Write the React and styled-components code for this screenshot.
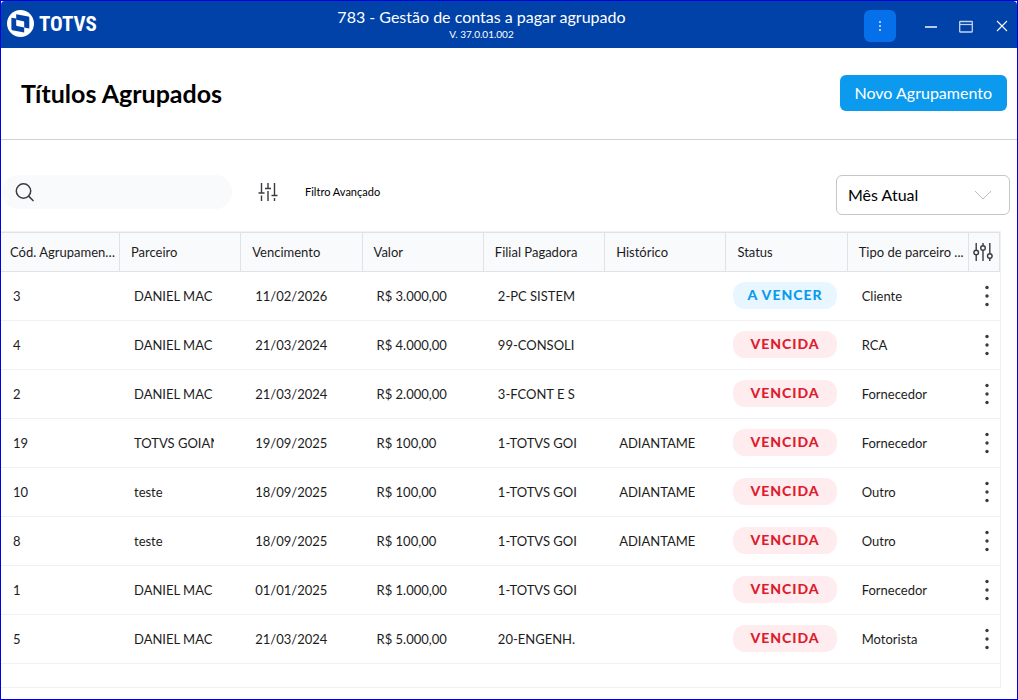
import React from 'react';
import styled, { createGlobalStyle } from 'styled-components';

const columns = [
   'Cód. Agrupamento',
   'Parceiro',
   'Vencimento',
   'Valor',
   'Filial Pagadora',
   'Histórico',
   'Status',
   'Tipo de parceiro ...',
];

const rows = [
   { id: 3, partner: 'DANIEL MAC', due: '11/02/2026', value: 'R$ 3.000,00', branch: '2-PC SISTEM', history: '', status: 'A VENCER', type: 'Cliente' },
   { id: 4, partner: 'DANIEL MAC', due: '21/03/2024', value: 'R$ 4.000,00', branch: '99-CONSOLI', history: '', status: 'VENCIDA', type: 'RCA' },
   { id: 2, partner: 'DANIEL MAC', due: '21/03/2024', value: 'R$ 2.000,00', branch: '3-FCONT E S', history: '', status: 'VENCIDA', type: 'Fornecedor' },
   { id: 19, partner: 'TOTVS GOIAN', due: '19/09/2025', value: 'R$ 100,00', branch: '1-TOTVS GOI', history: 'ADIANTAME', status: 'VENCIDA', type: 'Fornecedor' },
   { id: 10, partner: 'teste', due: '18/09/2025', value: 'R$ 100,00', branch: '1-TOTVS GOI', history: 'ADIANTAME', status: 'VENCIDA', type: 'Outro' },
   { id: 8, partner: 'teste', due: '18/09/2025', value: 'R$ 100,00', branch: '1-TOTVS GOI', history: 'ADIANTAME', status: 'VENCIDA', type: 'Outro' },
   { id: 1, partner: 'DANIEL MAC', due: '01/01/2025', value: 'R$ 1.000,00', branch: '1-TOTVS GOI', history: '', status: 'VENCIDA', type: 'Fornecedor' },
   { id: 5, partner: 'DANIEL MAC', due: '21/03/2024', value: 'R$ 5.000,00', branch: '20-ENGENH.', history: '', status: 'VENCIDA', type: 'Motorista' },
];

const LogoMark = () => (
   <svg width="27" height="27" viewBox="0 0 27 27" aria-hidden="true">
      <circle cx="13.5" cy="13.5" r="13.5" fill="#fff" />
      <path d="M9.2 4.3 L21.3 6.4 Q22.3 6.6 22.3 7.6 V18.6 L17.2 17.6 V12.2 Q17.2 11.4 16.4 11.2 L9.2 9.8 Z" fill="#0042a7" />
      <path d="M4.4 7.7 L9.2 8.6 V15 Q9.2 15.8 10 16 L17.2 17.4 V22.6 L5.4 20.2 Q4.4 20 4.4 19 Z" fill="#0042a7" />
   </svg>
);

const DotsIcon = () => (
   <svg width="4" height="12" viewBox="0 0 4 12" fill="#a9c9f8" aria-hidden="true">
      <rect x="1" y="1" width="2" height="2" />
      <rect x="1" y="5" width="2" height="2" />
      <rect x="1" y="9" width="2" height="2" />
   </svg>
);

const MinimizeIcon = () => (
   <svg width="14" height="14" viewBox="0 0 14 14" fill="none" stroke="#b5c8e6" strokeWidth="2" aria-hidden="true">
      <path d="M2 8 H14" />
   </svg>
);

const MaximizeIcon = () => (
   <svg width="14" height="14" viewBox="0 0 14 14" fill="none" stroke="#c4d3ec" aria-hidden="true">
      <rect x="0.7" y="2.5" width="12.6" height="10.5" rx="0.5" strokeWidth="1.3" />
      <path d="M1 5.5 H13" strokeWidth="1.2" />
   </svg>
);

const CloseIcon = () => (
   <svg width="12" height="12" viewBox="0 0 12 12" fill="none" stroke="#fff" strokeWidth="1.1" aria-hidden="true">
      <path d="M1 1 L11 11 M11 1 L1 11" />
   </svg>
);

const SearchIcon = () => (
   <svg width="20" height="20" viewBox="0 0 20 20" fill="none" stroke="#393b40" strokeWidth="1.5" aria-hidden="true">
      <circle cx="8.5" cy="9" r="7.2" />
      <path d="M13.6 14.1 L18.5 19" />
   </svg>
);

const FilterIcon = () => (
   <svg width="20" height="20" viewBox="0 0 20 20" fill="none" stroke="#393b40" strokeWidth="1.4" aria-hidden="true">
      <path d="M3.5 1 V11 M0.5 11 H6.5 M3.5 13.5 V19" />
      <path d="M10 1 V6.5 M7 6.5 H13 M10 9 V19" />
      <path d="M16.5 1 V13.5 M13.5 13.5 H19.5 M16.5 16 V19" />
   </svg>
);

const ColumnsIcon = () => (
   <svg width="20" height="20" viewBox="0 0 20 20" fill="none" stroke="#393b40" strokeWidth="1.4" aria-hidden="true">
      <circle cx="3.2" cy="10.5" r="2.3" />
      <path d="M3.2 1 V8.2 M3.2 12.8 V19" />
      <circle cx="10" cy="6" r="2.3" />
      <path d="M10 1 V3.7 M10 8.3 V19" />
      <circle cx="16.8" cy="14" r="2.3" />
      <path d="M16.8 1 V11.7 M16.8 16.3 V19" />
   </svg>
);

const MoreIcon = () => (
   <svg width="6" height="22" viewBox="0 0 6 22" fill="#393b40" aria-hidden="true">
      <circle cx="3" cy="2.5" r="1.7" />
      <circle cx="3" cy="11" r="1.7" />
      <circle cx="3" cy="19.5" r="1.7" />
   </svg>
);

const ChevronIcon = () => (
   <svg width="18" height="10" viewBox="0 0 18 10" fill="none" stroke="#b9bcc1" strokeWidth="1" aria-hidden="true">
      <path d="M1 1 L9 9 L17 1" />
   </svg>
);

export default function App() {
   return (
      <>
         <GlobalStyle />
         <Window>
            <TitleBar>
               <Logo>
                  <LogoMark />
                  <LogoText>TOTVS</LogoText>
               </Logo>
               <Caption>
                  <CaptionTitle>783 - Gestão de contas a pagar agrupado</CaptionTitle>
                  <CaptionVersion>V. 37.0.01.002</CaptionVersion>
               </Caption>
               <MenuButton aria-label="Menu"><DotsIcon /></MenuButton>
               <WindowControls>
                  <IconButton aria-label="Minimizar"><MinimizeIcon /></IconButton>
                  <IconButton aria-label="Maximizar"><MaximizeIcon /></IconButton>
                  <IconButton aria-label="Fechar"><CloseIcon /></IconButton>
               </WindowControls>
            </TitleBar>

            <PageHeader>
               <PageTitle>Títulos Agrupados</PageTitle>
               <PrimaryButton>Novo Agrupamento</PrimaryButton>
            </PageHeader>

            <Toolbar>
               <Search>
                  <SearchIcon />
                  <SearchInput type="text" aria-label="Pesquisar" />
               </Search>
               <FilterButton>
                  <FilterIcon />
                  Filtro Avançado
               </FilterButton>
               <Period>
                  <PeriodSelect aria-label="Período" defaultValue="Mês Atual">
                     <option>Mês Atual</option>
                  </PeriodSelect>
                  <ChevronIcon />
               </Period>
            </Toolbar>

            <Grid>
               <Table>
                  <colgroup>
                     <Col $width="119px" />
                     {columns.slice(1).map(name => <Col key={name} />)}
                     <Col $width="31px" />
                  </colgroup>
                  <thead>
                     <tr>
                        {columns.map(name => <HeadCell key={name}>{name}</HeadCell>)}
                        <HeadCell $action>
                           <IconButton aria-label="Configurar colunas"><ColumnsIcon /></IconButton>
                        </HeadCell>
                     </tr>
                  </thead>
                  <tbody>
                     {rows.map(row => (
                        <tr key={row.id}>
                           <Cell>{row.id}</Cell>
                           <Cell><Clip>{row.partner}</Clip></Cell>
                           <Cell><Clip>{row.due}</Clip></Cell>
                           <Cell><Clip>{row.value}</Clip></Cell>
                           <Cell><Clip>{row.branch}</Clip></Cell>
                           <Cell><Clip>{row.history}</Clip></Cell>
                           <StatusCell><Badge $open={row.status === 'A VENCER'}>{row.status}</Badge></StatusCell>
                           <Cell><Clip>{row.type}</Clip></Cell>
                           <ActionCell>
                              <IconButton aria-label={`Ações do agrupamento ${row.id}`}><MoreIcon /></IconButton>
                           </ActionCell>
                        </tr>
                     ))}
                  </tbody>
               </Table>
            </Grid>
         </Window>
      </>
   );
}


// Styled components
const GlobalStyle = createGlobalStyle`
   * {
      box-sizing: border-box;
   }

   body {
      margin: 0;
      background: #fff;
      color: #1c1c1c;
      font-family: Lato, 'Open Sans', sans-serif;
      font-size: 13px;
   }

   button, input, select {
      font-family: inherit;
   }

   svg {
      display: block;
      flex: none;
   }
`;

const Window = styled.div`
   display: flex;
   flex-direction: column;
   min-height: 100vh;
   border: 1px solid #0000e6;
`;

const TitleBar = styled.header`
   display: flex;
   align-items: center;
   height: 47px;
   padding: 3px 3px 0 6px;
   background: #0042a7;
   border-radius: 4px 4px 0 0;
   color: #fff;
`;

const Logo = styled.div`
   display: flex;
   align-items: center;
   gap: 5px;
   padding-bottom: 5px;
`;

const LogoText = styled.span`
   font-family: 'Liberation Sans Narrow', 'Roboto Condensed', Roboto, sans-serif;
   font-size: 21px;
   font-weight: bold;
   line-height: 24px;
`;

const Caption = styled.div`
   flex: 1;
   display: flex;
   flex-direction: column;
   align-items: center;
   padding: 0 0 4px 2px;
`;

const CaptionTitle = styled.span`
   font-size: 16px;
   line-height: 20px;
`;

const CaptionVersion = styled.span`
   font-size: 10px;
   line-height: 14px;
`;

const MenuButton = styled.button`
   display: flex;
   align-items: center;
   justify-content: center;
   width: 32px;
   height: 32px;
   padding: 0;
   border: 0;
   border-radius: 6px;
   background: #0670ea;
   cursor: pointer;
`;

const WindowControls = styled.div`
   display: flex;
   gap: 12px;
   margin-left: 22px;
`;

const IconButton = styled.button`
   display: inline-flex;
   align-items: center;
   justify-content: center;
   width: 24px;
   height: 24px;
   padding: 0;
   border: 0;
   background: none;
   vertical-align: middle;
   cursor: pointer;
`;

const PageHeader = styled.div`
   display: flex;
   align-items: center;
   justify-content: space-between;
   height: 92px;
   padding: 0 10px 2px 20px;
   border-bottom: 1px solid #cdd0d4;
`;

const PageTitle = styled.h1`
   margin: 0;
   color: #000;
   font-size: 25px;
   font-weight: bold;
   line-height: 32px;
`;

const PrimaryButton = styled.button`
   height: 36px;
   padding: 0 15px;
   border: 0;
   border-radius: 6px;
   background: #0c9aee;
   color: #fff;
   font-size: 16px;
   cursor: pointer;
`;

const Toolbar = styled.div`
   display: flex;
   align-items: flex-start;
   height: 91px;
   padding: 35px 7px 0 1px;
`;

const Search = styled.label`
   display: flex;
   align-items: center;
   gap: 8px;
   width: 230px;
   height: 34px;
   padding: 0 13px;
   border-radius: 17px;
   background: #f9fafc;
`;

const SearchInput = styled.input`
   flex: 1;
   min-width: 0;
   border: 0;
   outline: none;
   background: none;
   font-size: 13px;
`;

const FilterButton = styled.button`
   display: flex;
   align-items: center;
   gap: 27px;
   height: 33px;
   margin-left: 26px;
   padding: 0;
   border: 0;
   background: none;
   color: #000;
   font-size: 11px;
   cursor: pointer;
`;

const Period = styled.div`
   display: grid;
   align-items: center;
   width: 174px;
   margin-left: auto;

   > * {
      grid-area: 1 / 1;
   }

   svg {
      justify-self: end;
      margin-right: 18px;
      pointer-events: none;
   }
`;

const PeriodSelect = styled.select`
   width: 100%;
   height: 40px;
   padding: 0 40px 2px 11px;
   border: 1px solid #c4c6ca;
   border-radius: 6px;
   appearance: none;
   background: #fff;
   color: #000;
   font-size: 16px;
`;

const Grid = styled.main`
   flex: 1;
   margin: 0 16px 11px 0;
   border: 1px solid #f0f1f4;
   border-left: 0;
`;

const Table = styled.table`
   width: 100%;
   table-layout: fixed;
   border-collapse: separate;
   border-spacing: 0;
`;

const Col = styled.col`
   width: ${props => props.$width || 'auto'};
`;

const HeadCell = styled.th`
   height: 40px;
   padding: ${props => props.$action ? '0 2px' : '0 4px 0 11px'};
   overflow: hidden;
   border: solid #e0e2e6;
   border-width: 1px 1px 1px 0;
   background: #f9fafc;
   font-weight: normal;
   line-height: 18px;
   text-align: left;
   text-overflow: ellipsis;
   white-space: nowrap;

   &:first-child {
      padding-left: 9px;
   }
`;

const Cell = styled.td`
   height: 49px;
   padding: 0 27px 0 14px;
   border-bottom: 1px solid #f0f1f4;
   line-height: 18px;

   &:first-child {
      padding-left: 12px;
   }
`;

const Clip = styled.div`
   overflow: hidden;
   white-space: nowrap;
`;

const StatusCell = styled(Cell)`
   padding: 0 11px 1px 7px;
`;

const ActionCell = styled(Cell)`
   padding: 0 1px 0 6px;
`;

const Badge = styled.div`
   padding-bottom: 1px;
   border-radius: 12px;
   background: ${props => props.$open ? '#e8f7ff' : '#ffecee'};
   color: ${props => props.$open ? '#0c9aee' : '#dc1d2e'};
   font-size: 14px;
   font-weight: 900;
   letter-spacing: 1px;
   line-height: 26px;
   text-align: center;
`;
